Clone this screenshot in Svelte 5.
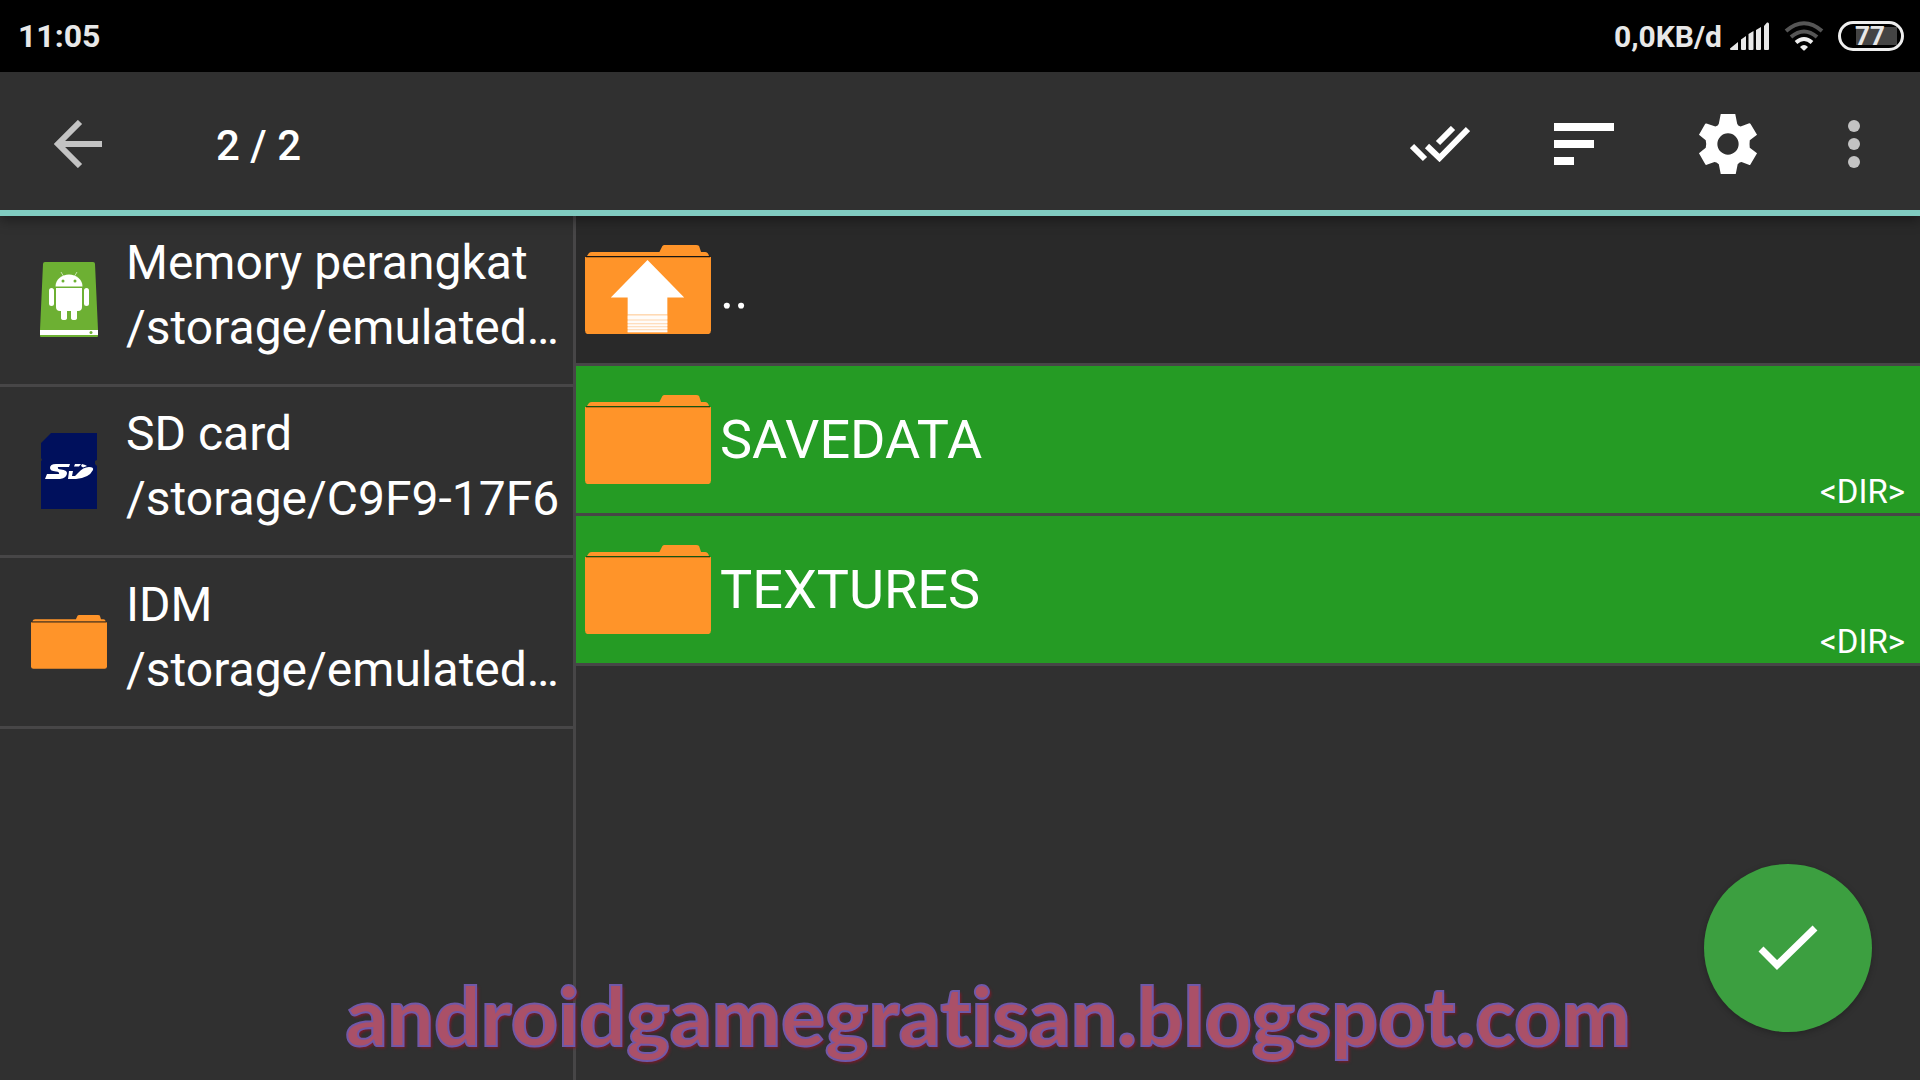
<script>
  const storages = [
    { icon: "device", name: "Memory perangkat", path: "/storage/emulated/0" },
    { icon: "sd", name: "SD card", path: "/storage/C9F9-17F6" },
    { icon: "folder", name: "IDM", path: "/storage/emulated/0/IDM" },
  ];
  let files = $state([
    { name: "..", up: true, selected: false },
    { name: "SAVEDATA", up: false, selected: true },
    { name: "TEXTURES", up: false, selected: true },
  ]);
  const folders = $derived(files.filter((file) => !file.up));
  const selected = $derived(folders.filter((file) => file.selected));

  const onFileClicked = (file) => {
    if (file.up) {
      return;
    }
    file.selected = !file.selected;
  };
  const onSelectAllClicked = () => {
    folders.forEach((file) => {
      file.selected = true;
    });
  };
</script>

{#snippet folder(up)}
  <svg class="folder" viewBox="0 0 127 90" aria-hidden="true">
    <path fill="#ff9429" d="M2 11 4 8Q5 7 7 7H75L78 1Q79 0 80 0H112Q114 0 115 1L117 7H121Q124 7 125 11Z" />
    <path fill="#ff9429" d="M0 12H127V86Q127 90 123 90H4Q0 90 0 86Z" />
    <path fill="#000" opacity=".45" d="M1 11H126V12.500H1Z" />
    {#if up}
      <path fill="#fff" d="M63 15 100 53H83V70H43V53H26Z" />
      <path fill="#fff" opacity=".93" d="M43 71H83V75H43ZM43 76H83V79H43ZM43 80H83V82H43ZM43 83H83V85H43ZM43 86H83V88H43Z" />
      <path fill="#fff" opacity=".6" d="M43 70H83V88H43Z" />
    {/if}
  </svg>
{/snippet}

<div class="screen">
  <div class="status">
    <span>11:05</span>
    <div class="indicators">
      <span class="speed">0,0KB/d</span>
      <svg class="signal" width="40" height="28" viewBox="0 0 40 28" fill="#e8e8e8" aria-hidden="true">
        <path d="M0 26.500 8 20V28H1Q0 28 0 26.500ZM11 17.500 16 14V27Q16 28 15 28H12Q11 28 11 27ZM18.500 12 23.500 9V27Q23.500 28 22.500 28H19.500Q18.500 28 18.500 27ZM26 8 31 5V27Q31 28 30 28H27Q26 28 26 27ZM34 4 37 .6Q39 0 39 2V27Q39 28 38 28H35Q34 28 34 27Z" />
      </svg>
      <svg class="wifi" width="40" height="30" viewBox="0 0 40 30" fill="none" stroke-width="4" aria-hidden="true">
        <path stroke="#555" d="M2 10Q20-5.500 38 10M7 16Q20 5 33 16" />
        <path stroke="#eee" d="M12 21.500Q20 14.500 28 21.500" />
        <path fill="#eee" d="M16 26Q20 22 24 26L20.500 29.500H19.500Z" />
      </svg>
      <span class="battery">77</span>
    </div>
  </div>

  <header class="toolbar">
    <button class="back" aria-label="Back">
      <svg width="48" height="48" viewBox="0 0 48 48" fill="none" stroke="#c3c3c3" stroke-width="6" aria-hidden="true">
        <path d="M26 2 4 24 26 46M4 24H48" />
      </svg>
    </button>
    <h1>{selected.length} / {folders.length}</h1>
    <button class="action" aria-label="Select all" onclick={onSelectAllClicked}>
      <svg width="60" height="36" viewBox="0 0 60 36" fill="none" stroke="#fff" stroke-width="6" aria-hidden="true">
        <path d="M2 20 15 33M43 2 28 17M17 20 29.500 32 58 3" />
      </svg>
    </button>
    <button class="action" aria-label="Sort">
      <svg width="60" height="42" viewBox="0 0 60 42" fill="#fff" aria-hidden="true">
        <path d="M0 0H60V8H0ZM0 17H40V25H0ZM0 34H20V42H0Z" />
      </svg>
    </button>
    <button class="action" aria-label="Settings">
      <svg width="60" height="60" viewBox="0 0 62 62" fill="#fff" fill-rule="evenodd" aria-hidden="true">
        <path d="M23.500 0H38.500L40.500 10Q41 12 44 13L53 9.500Q54 9.500 54.500 10.500L61 21.500 53.500 27Q53 31 53.500 35L61 40.500 54 52.500Q53.500 53 52.500 52.500L45 49.500Q43 49.500 41 52L39 62H23.500L21.500 52Q19 49.500 17 49.500L9 52.500Q8 53 7.500 52L1 40.500 8 35Q9 31 8 27L1 21.500 7.500 10Q8.500 9.500 9.500 10L18 13Q21 12 21.500 10ZM31 20A11 11 0 1 0 31 42 11 11 0 1 0 31 20Z" />
      </svg>
    </button>
    <button class="more" aria-label="More options">
      <svg width="12" height="48" viewBox="0 0 12 48" fill="#c3c3c3" aria-hidden="true">
        <circle cx="6" cy="6" r="6" />
        <circle cx="6" cy="24" r="6" />
        <circle cx="6" cy="42" r="6" />
      </svg>
    </button>
  </header>

  <main>
    <nav class="storages">
      {#each storages as storage}
        <button class="storage">
          <span class="icon">
            {#if storage.icon === "device"}
              <svg width="60" height="76" viewBox="0 0 60 76" aria-hidden="true">
                <path fill="#6db033" d="M6 0H54Q56 0 56 2L59 68H1L4 2Q4 0 6 0Z" />
                <path fill="#fff" d="M1 68H59V73H1Z" />
                <path fill="#6db033" d="M1 73H59V74Q59 75 58 75H2Q1 75 1 74Z" />
                <circle cx="52" cy="70.500" r="1.500" fill="#6db033" />
                <g fill="#fff">
                  <path d="M16.500 24.500A13.500 12 0 0 1 43.500 24.500Z" />
                  <path d="M17 26H43V45Q43 49 39 49H38V56Q38 58 35 58T32 56V49H28V56Q28 58 25 58T22 56V49H21Q17 49 17 45Z" />
                  <rect x="10" y="26" width="5" height="18" rx="2.500" />
                  <rect x="45" y="26" width="5" height="18" rx="2.500" />
                </g>
                <path stroke="#fff" opacity=".6" d="M22 10 25 15M38 10 35 15" />
                <circle cx="24" cy="19" r="1.500" fill="#6db033" />
                <circle cx="36" cy="19" r="1.500" fill="#6db033" />
              </svg>
            {:else if storage.icon === "sd"}
              <svg width="56" height="76" viewBox="0 0 56 76" aria-hidden="true">
                <path fill="#00105c" d="M10 0H56V27L54 28V31L56 33V76H0V28L1 27 0 25V10Z" />
                <path fill="#fff" d="M29 31H15Q9 31 9 35 9 38 15 38.500 19 39 18 41H6L4 46H19Q26 45 26 40 26 37 20 36.500 16 36 17 34H28ZM34 31H40L38 33.500H33ZM41 31Q45 32 46 33L42 34.500 40 33ZM32 38H28L27 46H35Q48 45 52 37 53 34 48 34 42 34 37 40L34 43H31Z" />
              </svg>
            {:else}
              {@render folder(false)}
            {/if}
          </span>
          <span class="text">
            <span class="line">{storage.name}</span>
            <span class="line">{storage.path}</span>
          </span>
        </button>
      {/each}
    </nav>

    <section class="files">
      {#each files as file}
        <button class="file" class:up={file.up} class:selected={file.selected} onclick={() => onFileClicked(file)}>
          {@render folder(file.up)}
          <span class="name">{file.name}</span>
          {#if !file.up}
            <span class="kind">&lt;DIR&gt;</span>
          {/if}
        </button>
      {/each}
    </section>
  </main>

  <div class="watermark">androidgamegratisan.blogspot.com</div>

  <button class="confirm" aria-label="Confirm">
    <svg width="60" height="46" viewBox="0 0 60 46" fill="none" stroke="#fff" stroke-width="7" aria-hidden="true">
      <path d="M3 24 19 40 57 3" />
    </svg>
  </button>
</div>

<style>
:global(body) {
  background: #303030;
}
.screen {
  position: relative;
  display: flex;
  flex-direction: column;
  min-height: 100vh;
  overflow: hidden;
  color: #fff;
  background: #303030;
  font-family: Roboto, sans-serif;
}
button {
  margin: 0;
  padding: 0;
  border: 0;
  background: none;
  color: inherit;
  font: inherit;
  text-align: left;
  cursor: pointer;
}
svg {
  display: block;
  flex: none;
}
.status {
  display: flex;
  align-items: center;
  justify-content: space-between;
  height: 72px;
  padding: 0 16px 0 18px;
  background: #000;
  color: #e8e8e8;
  font-size: 32px;
  font-weight: 700;
}
.indicators {
  display: flex;
  align-items: center;
}
.speed {
  font-size: 30px;
}
.signal {
  margin: 0 14px 0 8px;
}
.wifi {
  margin-right: 14px;
}
.battery {
  box-sizing: border-box;
  width: 66px;
  height: 30px;
  border: 3px solid #eee;
  border-radius: 15px;
  padding-right: 2px;
  background: linear-gradient(#444, #444) 15px 3px / 41px 18px no-repeat;
  font-size: 26px;
  line-height: 24px;
  text-align: center;
}
.toolbar {
  position: relative;
  display: flex;
  align-items: center;
  height: 144px;
  padding-right: 12px;
  box-shadow: inset 0 -6px #80cbc0, 0 4px 12px rgba(0, 0, 0, 0.4);
}
.toolbar button {
  display: flex;
  align-items: center;
  justify-content: center;
  height: 100%;
}
.toolbar .back {
  width: 156px;
}
.toolbar h1 {
  flex: 1;
  margin: 0;
  padding: 2px 0 0 60px;
  font-size: 42px;
  font-weight: 500;
}
.toolbar .action {
  width: 144px;
}
.toolbar .more {
  width: 108px;
}
main {
  display: flex;
  flex: 1;
}
.storages {
  box-sizing: border-box;
  width: 30%;
  border-right: 3px solid #474647;
}
.storage {
  display: flex;
  align-items: center;
  width: 100%;
  padding: 14px 9px 24px 12px;
  border-bottom: 3px solid #474647;
}
.storage .icon {
  display: flex;
  justify-content: center;
  width: 114px;
  padding-top: 10px;
}
.storage .folder {
  width: 76px;
}
.storage .text {
  flex: 1;
  min-width: 0;
  font-size: 48px;
  line-height: 65px;
}
.storage .line {
  display: block;
  overflow: hidden;
  text-overflow: ellipsis;
  white-space: nowrap;
}
.files {
  flex: 1;
  min-width: 0;
}
.file {
  display: flex;
  align-items: center;
  width: 100%;
  height: 150px;
  padding: 0 15px 0 9px;
  border-bottom: 3px solid #474647;
}
.file.up {
  background: #292929;
}
.file.selected {
  background: #259b24;
  background-clip: padding-box;
}
.file .folder {
  width: 126px;
}
.file .name {
  flex: 1;
  padding-left: 9px;
  font-size: 54px;
}
.file .kind {
  align-self: flex-end;
  padding-bottom: 3px;
  font-size: 33px;
  line-height: 36px;
}
.watermark {
  position: absolute;
  right: 0;
  bottom: 22px;
  left: 0;
  padding-left: 56px;
  color: #aa5068;
  font-family: Lato, sans-serif;
  font-size: 82px;
  font-weight: 900;
  font-variant-ligatures: none;
  line-height: 88px;
  text-align: center;
  white-space: nowrap;
  pointer-events: none;
  -webkit-text-stroke: 2px #7058a8;
  text-shadow: 2px 2px 3px #801828;
}
.confirm {
  position: absolute;
  right: 48px;
  bottom: 48px;
  display: flex;
  align-items: center;
  justify-content: center;
  width: 168px;
  height: 168px;
  border-radius: 50%;
  background: #3c9f40;
  box-shadow: 0 2px 6px rgba(0, 0, 0, 0.25);
}
</style>
